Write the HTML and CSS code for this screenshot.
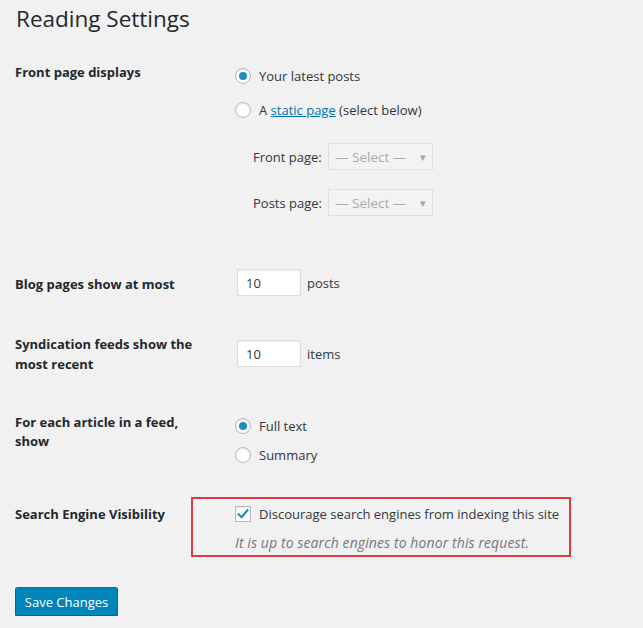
FILE: index.html
```html
<!DOCTYPE html>
<html>
<head>
<meta charset="utf-8">
<link rel="stylesheet" href="styles.css">
</head>
<body>
<div class="wrap">
  <h1 class="title">Reading Settings</h1>

  <div class="row row-front">
    <div class="th">Front page displays</div>
    <div class="td">
      <div class="choice"><span class="radio checked"></span><span>Your latest posts</span></div>
      <div class="choice choice-second"><span class="radio"></span><span>A <a class="link" href="#">static page</a> (select below)</span></div>
      <div class="subrow sub-first"><span class="sublabel">Front page:</span><span class="select"><span>— Select —</span><span class="arrow">▾</span></span></div>
      <div class="subrow sub-second"><span class="sublabel">Posts page:</span><span class="select"><span>— Select —</span><span class="arrow">▾</span></span></div>
    </div>
  </div>

  <div class="row row-blog">
    <div class="th">Blog pages show at most</div>
    <div class="td inline"><span class="num">10</span><span class="unit">posts</span></div>
  </div>

  <div class="row row-synd">
    <div class="th">Syndication feeds show the most recent</div>
    <div class="td inline"><span class="num">10</span><span class="unit">items</span></div>
  </div>

  <div class="row row-feed">
    <div class="th th-tight">For each article in a feed, show</div>
    <div class="td">
      <div class="choice"><span class="radio checked"></span><span>Full text</span></div>
      <div class="choice choice-feed2"><span class="radio"></span><span>Summary</span></div>
    </div>
  </div>

  <div class="row row-seo">
    <div class="th">Search Engine Visibility</div>
    <div class="td">
      <div class="choice"><span class="checkbox"><svg viewBox="0 0 16 16" width="16" height="16"><path d="M3.6 8.2 L6.6 11.2 L12.4 4.4" fill="none" stroke="#1e8cbe" stroke-width="2.2" stroke-linecap="square"/></svg></span><span>Discourage search engines from indexing this site</span></div>
      <div class="desc">It is up to search engines to honor this request.</div>
    </div>
    <div class="highlight"></div>
  </div>

  <div class="submit"><span class="button">Save Changes</span></div>
</div>
</body>
</html>
```
FILE: styles.css
```css
html, body {
  margin: 0;
  padding: 0;
  background: #f1f1f1;
}
body {
  font-family: "Open Sans", "Noto Sans", sans-serif;
  font-size: 13px;
  color: #32373c;
}
.wrap {
  padding-left: 15px;
  width: 628px;
}
.title {
  margin: 4px 0 0 1px;
  font-size: 22.5px;
  font-weight: 400;
  line-height: 30px;
  color: #23282d;
}
.row {
  display: flex;
  align-items: flex-start;
  position: relative;
}
.th {
  width: 220px;
  flex: none;
  font-weight: 700;
  line-height: 20px;
  color: #23282d;
  padding-right: 24px;
  box-sizing: border-box;
}
.th-tight { line-height: 19px; }
.td { flex: 1; }
.choice {
  display: flex;
  align-items: center;
  height: 20px;
  line-height: 20px;
}
.radio {
  width: 16px;
  height: 16px;
  box-sizing: border-box;
  border: 1px solid #b4b9be;
  border-radius: 50%;
  background: #fff;
  box-shadow: inset 0 1px 2px rgba(0,0,0,.1);
  margin-right: 8px;
  display: flex;
  align-items: center;
  justify-content: center;
  flex: none;
}
.radio.checked::after {
  content: "";
  width: 8px;
  height: 8px;
  border-radius: 50%;
  background: #1e8cbe;
}
.checkbox {
  width: 16px;
  height: 16px;
  box-sizing: border-box;
  border: 1px solid #b4b9be;
  background: #fff;
  box-shadow: inset 0 1px 2px rgba(0,0,0,.1);
  margin-right: 8px;
  flex: none;
  display: flex;
  align-items: center;
  justify-content: center;
}
.checkbox svg { display: block; margin: -1px; }
.link { color: #0073aa; text-decoration: underline; }
.choice-second { margin-top: 14px; }
.subrow {
  display: flex;
  align-items: center;
  padding-left: 18px;
}
.sub-first { margin-top: 23px; }
.sub-second { margin-top: 19px; }
.sublabel { width: 75px; flex: none; }
.select {
  width: 105px;
  height: 27px;
  box-sizing: border-box;
  border: 1px solid #dfdfdf;
  display: flex;
  align-items: center;
  justify-content: space-between;
  padding: 0 6px 0 6px;
  color: #a9abad;
  background: #f3f3f3;
  font-size: 13.5px;
}
.arrow { font-size: 11px; color: #a0a5aa; }
.inline { display: flex; align-items: center; }
.num {
  width: 64px;
  height: 27px;
  box-sizing: border-box;
  border: 1px solid #ddd;
  background: #fff;
  box-shadow: inset 0 1px 2px rgba(0,0,0,.07);
  padding-left: 8px;
  display: flex;
  align-items: center;
  margin-left: 2px;
}
.unit { margin-left: 6px; }

.row-front .th { padding-top: 28px; }
.row-front .td { padding-top: 32px; }
.row-blog .th { padding-top: 58px; }
.row-blog .td { padding-top: 53px; }
.row-synd .th { padding-top: 38px; }
.row-synd .td { padding-top: 44px; }
.row-feed .th { padding-top: 39px; }
.row-feed .td { padding-top: 42px; }
.choice-feed2 { margin-top: 9px; }
.row-seo .th { padding-top: 39px; }
.row-seo .td { padding-top: 39px; }
.desc {
  margin-top: 9px;
  line-height: 20px;
  font-style: italic;
  font-size: 14px;
  letter-spacing: 0.1px;
  color: #72777c;
}
.highlight {
  position: absolute;
  left: 176px;
  top: 32px;
  width: 380px;
  height: 60px;
  box-sizing: border-box;
  border: 2px solid #e3383e;
}
.submit { margin-top: 34px; }
.button {
  display: inline-flex;
  align-items: center;
  justify-content: center;
  width: 103px;
  height: 29px;
  box-sizing: border-box;
  background: #0085ba;
  border: 1px solid;
  border-color: #0073aa #006799 #006799;
  border-radius: 3px;
  box-shadow: 0 1px 0 #006799;
  color: #fff;
  font-size: 13px;
}
```
